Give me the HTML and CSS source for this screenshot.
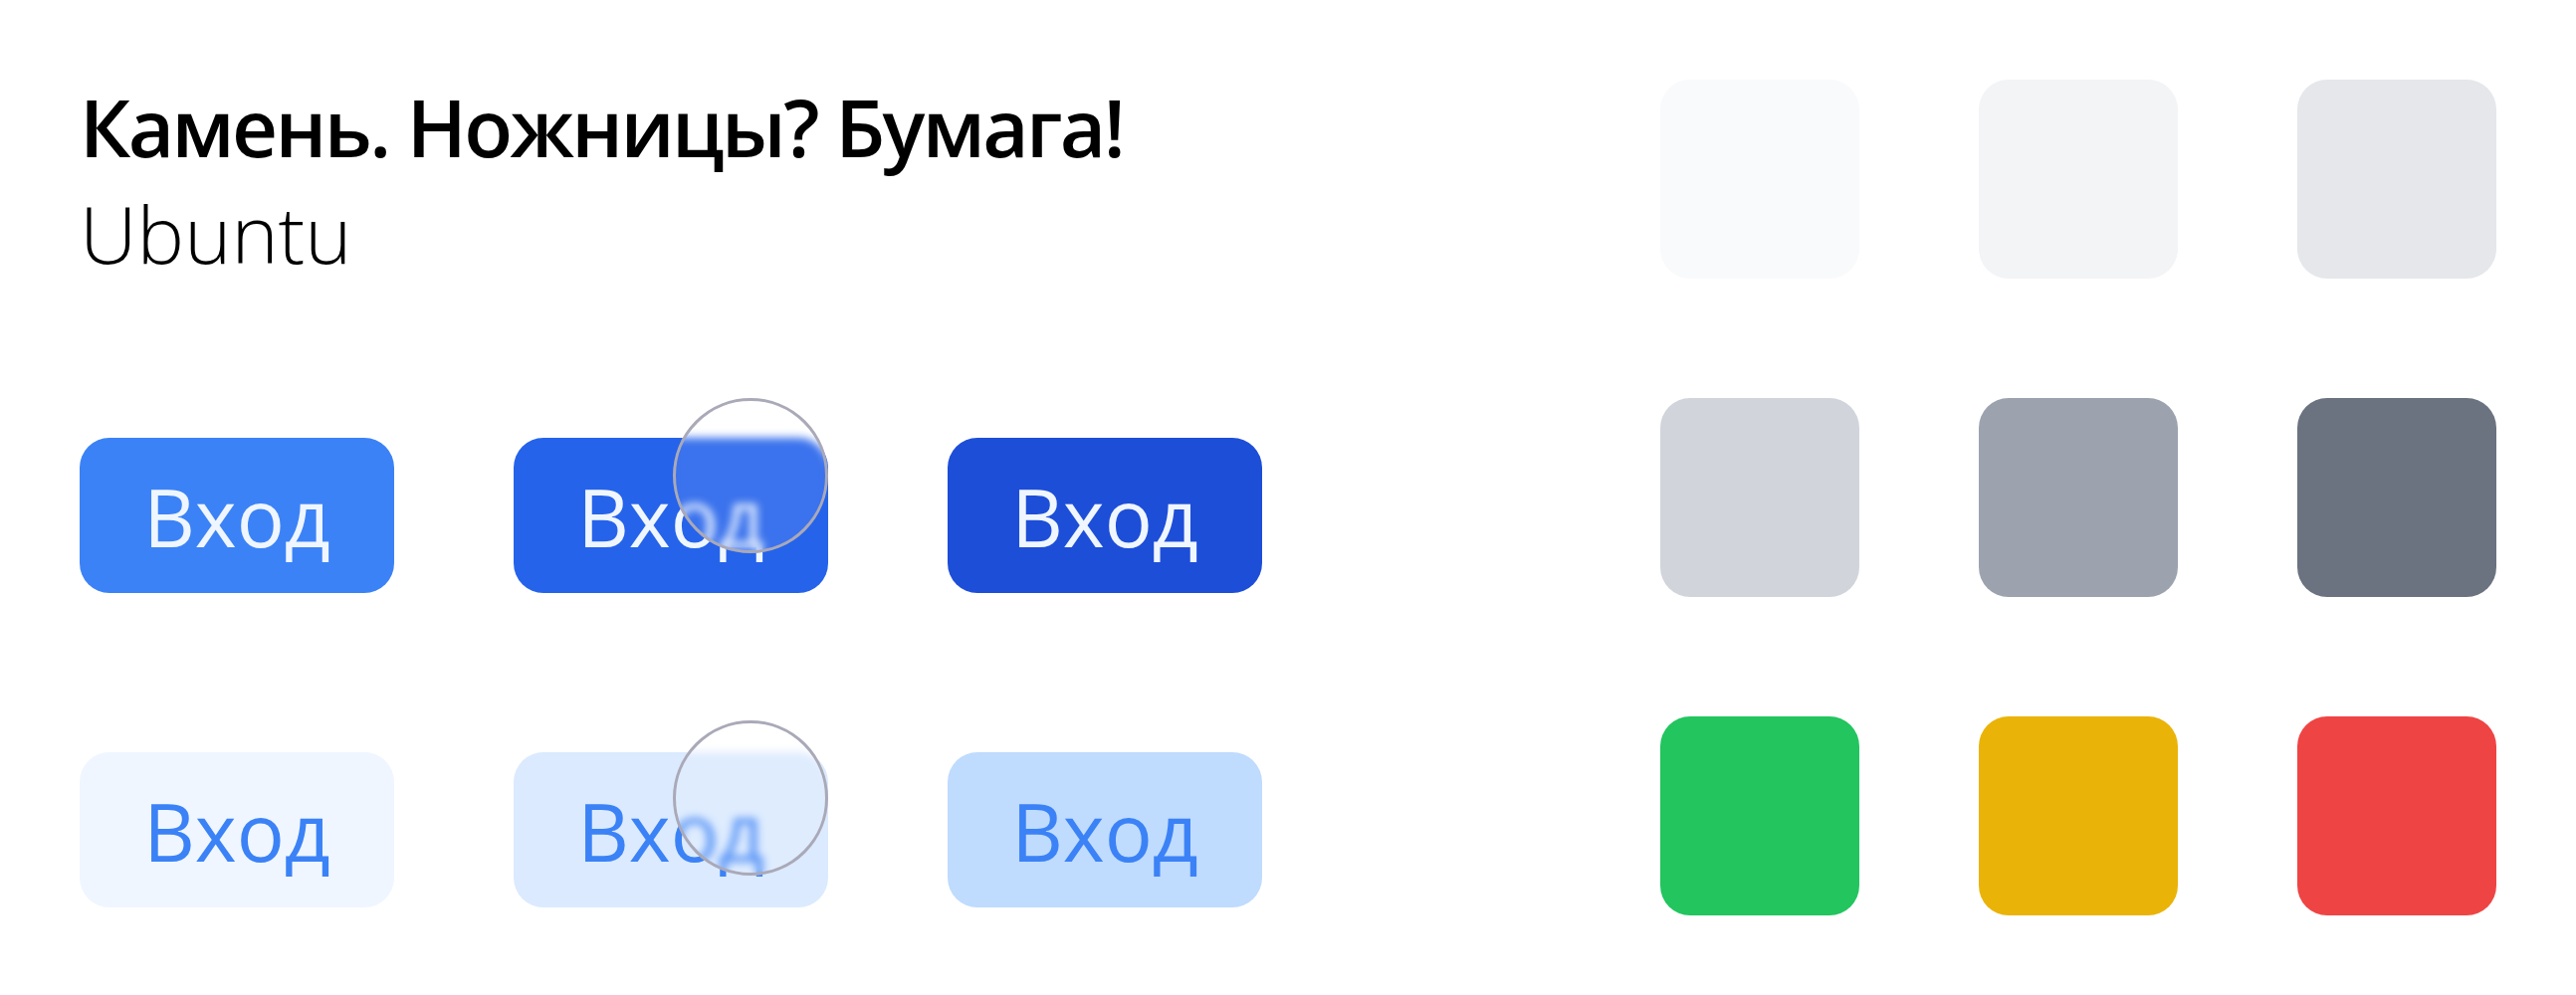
FILE: index.html
```html
<!DOCTYPE html>
<html lang="ru">
<head>
<meta charset="utf-8">
<title>Камень. Ножницы? Бумага!</title>
<link rel="stylesheet" href="styles.css">
</head>
<body>
<main class="page">
  <section class="left">
    <header class="heading">
      <h1 class="title">Камень. Ножницы? Бумага!</h1>
      <p class="subtitle">Ubuntu</p>
    </header>
    <div class="buttons">
      <button class="btn btn-solid-1">Вход</button>
      <button class="btn btn-solid-2">Вход<span class="glass glass-1"></span></button>
      <button class="btn btn-solid-3">Вход</button>
      <button class="btn btn-soft-1">Вход</button>
      <button class="btn btn-soft-2">Вход<span class="glass glass-2"></span></button>
      <button class="btn btn-soft-3">Вход</button>
    </div>
  </section>
  <section class="swatches">
    <div class="swatch gray-50"></div>
    <div class="swatch gray-100"></div>
    <div class="swatch gray-200"></div>
    <div class="swatch gray-300"></div>
    <div class="swatch gray-400"></div>
    <div class="swatch gray-500"></div>
    <div class="swatch green"></div>
    <div class="swatch yellow"></div>
    <div class="swatch red"></div>
  </section>
</main>
</body>
</html>
```

FILE: styles.css
```css
* { box-sizing: border-box; }
html, body { margin: 0; padding: 0; background: #ffffff; }
body { font-family: "Open Sans", "Noto Sans", sans-serif; color: #000; }

.page {
  width: 2588px;
  height: 1000px;
  padding: 80px;
  display: flex;
  justify-content: space-between;
  align-items: flex-start;
}

.left { display: flex; flex-direction: column; }

.heading { margin: 0; }
.title {
  margin: 0;
  font-size: 80px;
  font-weight: 650;
  line-height: 94px;
  letter-spacing: -2.6px;
  white-space: nowrap;
}
.subtitle {
  margin: 0;
  font-size: 80px;
  font-weight: 300;
  line-height: 120px;
}

.buttons {
  margin-top: 146px;
  display: grid;
  grid-template-columns: repeat(3, 316px);
  column-gap: 120px;
  row-gap: 160px;
}

.btn {
  position: relative;
  height: 156px;
  border: 0;
  border-radius: 30px;
  padding: 0;
  display: flex;
  align-items: center;
  justify-content: center;
  font-family: "Open Sans", "Noto Sans", sans-serif;
  font-size: 80px;
  font-weight: 400;
  line-height: normal;
}
.btn-solid-1 { background: #3b82f6; color: #eff6ff; }
.btn-solid-2 { background: #2563eb; color: #eff6ff; }
.btn-solid-3 { background: #1d4ed8; color: #eff6ff; }
.btn-soft-1 { background: #eff6ff; color: #3b82f6; }
.btn-soft-2 { background: #dbeafe; color: #3b82f6; }
.btn-soft-3 { background: #bfdbfe; color: #3b82f6; }

.glass {
  position: absolute;
  left: 160px;
  width: 156px;
  height: 156px;
  border-radius: 50%;
  border: 3px solid #aaa9b8;
  background: rgba(255, 255, 255, 0.1);
  -webkit-backdrop-filter: blur(4px);
  backdrop-filter: blur(4px);
}
.glass-1 { top: -40px; }
.glass-2 { top: -32px; }

.swatches {
  display: grid;
  grid-template-columns: repeat(3, 200px);
  grid-auto-rows: 200px;
  gap: 120px;
}
.swatch { border-radius: 30px; }
.gray-50 { background: #f9fafb; }
.gray-100 { background: #f3f4f6; }
.gray-200 { background: #e5e7eb; }
.gray-300 { background: #d1d5db; }
.gray-400 { background: #9ca3af; }
.gray-500 { background: #6b7280; }
.green { background: #22c55e; }
.yellow { background: #eab308; }
.red { background: #ef4444; }
```
